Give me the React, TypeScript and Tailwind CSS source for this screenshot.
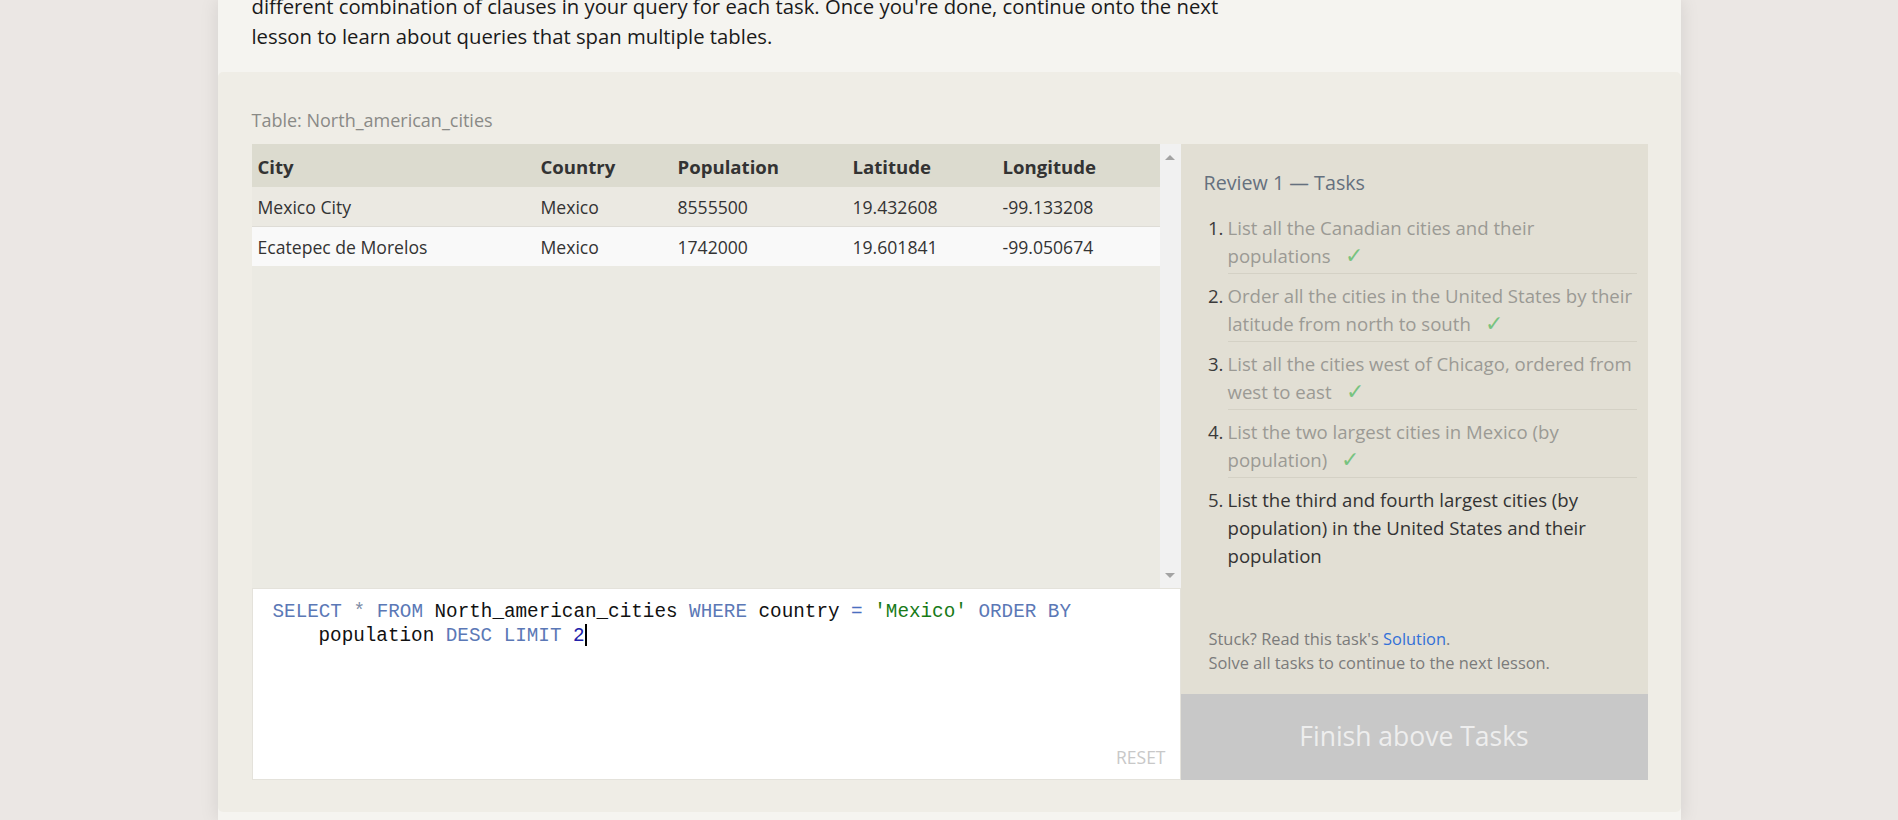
const rows = [
  ["Mexico City", "Mexico", "8555500", "19.432608", "-99.133208"],
  ["Ecatepec de Morelos", "Mexico", "1742000", "19.601841", "-99.050674"],
];

const tasks: { lines: string[]; done: boolean }[] = [
  { lines: ["List all the Canadian cities and their", "populations"], done: true },
  { lines: ["Order all the cities in the United States by their", "latitude from north to south"], done: true },
  { lines: ["List all the cities west of Chicago, ordered from", "west to east"], done: true },
  { lines: ["List the two largest cities in Mexico (by", "population)"], done: true },
  {
    lines: ["List the third and fourth largest cities (by", "population) in the United States and their", "population"],
    done: false,
  },
];

function Kw({ children }: { children: React.ReactNode }) {
  return <span className="text-[#5b78b6]">{children}</span>;
}

export default function App() {
  return (
    <div className="w-full h-[820px] overflow-hidden bg-[#ebe7e4] font-['Open_Sans',sans-serif]">
      <div className="mx-auto w-[1463px] h-full bg-[#f5f4f0] shadow-[0_0_18px_rgba(0,0,0,0.10)] flex flex-col">
        <div className="h-[72px] shrink-0 overflow-hidden px-[34px]">
          <p className="-mt-[9px] text-[20.3px] leading-[30px] text-[#1a1a1a] whitespace-nowrap">
            different combination of clauses in your query for each task. Once you're done, continue onto the next
            <br />
            lesson to learn about queries that span multiple tables.
          </p>
        </div>
        <div className="h-[740px] shrink-0 bg-[#efede6] rounded-[5px] pl-[34px] pr-[32px] pt-[36px]">
          <div className="h-[24px] leading-[24px] text-[18px] text-[#8a8a86] mb-[12px]">Table: North_american_cities</div>
          <div className="flex h-[636px]">
            <div className="w-[929px] flex flex-col">
              <div className="h-[444px] shrink-0 flex bg-[#ebeae3]">
                <div className="flex-1 text-[#333]">
                  <div className="grid grid-cols-[283px_137px_175px_150px_1fr] h-[43px] items-center bg-[#dcdbcf] text-[18.6px] font-bold pt-[2px]">
                    {["City", "Country", "Population", "Latitude", "Longitude"].map((h) => (
                      <div key={h} className="pl-[6px]">{h}</div>
                    ))}
                  </div>
                  {rows.map((r, i) => (
                    <div
                      key={i}
                      className={
                        i === 0
                          ? "grid grid-cols-[283px_137px_175px_150px_1fr] h-[40px] items-center bg-[#ebe9e2] border-b border-[#dedcd6] text-[17.6px] pt-[1px]"
                          : "grid grid-cols-[283px_137px_175px_150px_1fr] h-[39px] items-center bg-[#f9f9f9] text-[17.6px] pt-[1px]"
                      }
                    >
                      {r.map((c, j) => (
                        <div key={j} className="pl-[6px]">{c}</div>
                      ))}
                    </div>
                  ))}
                </div>
                <div className="w-[21px] bg-[#f1f1f1] flex flex-col items-center justify-between pt-[11px] pb-[10px]">
                  <div className="w-0 h-0 border-l-[5px] border-r-[5px] border-b-[5px] border-l-transparent border-r-transparent border-b-[#a3a3a3]" />
                  <div className="w-0 h-0 border-l-[5px] border-r-[5px] border-t-[5px] border-l-transparent border-r-transparent border-t-[#a3a3a3]" />
                </div>
              </div>
              <div className="h-[192px] shrink-0 bg-white border border-[#e4e2db] flex flex-col pl-[20px] pr-[14px] pt-[11px] pb-[11px]">
                <div className="font-['Liberation_Mono',monospace] text-[19.3px] leading-[24px] text-[#111] whitespace-pre">
                  <div>
                    <Kw>SELECT</Kw> <span className="text-[#7d8ca6]">*</span> <Kw>FROM</Kw> North_american_cities <Kw>WHERE</Kw> country{" "}
                    <span className="text-[#4a6fc0]">=</span> <span className="text-[#187a18]">'Mexico'</span> <Kw>ORDER BY</Kw>
                  </div>
                  <div className="pl-[46px]">
                    population <Kw>DESC</Kw> <Kw>LIMIT</Kw> <span className="text-[#2222aa]">2</span>
                    <span className="inline-block w-[2px] h-[22px] bg-black align-[-5px]" />
                  </div>
                </div>
                <div className="mt-auto self-end text-[17.5px] leading-[22px] text-[#c8c8c8]">RESET</div>
              </div>
            </div>
            <div className="w-[467px] bg-[#e2dfd4] flex flex-col">
              <div className="pl-[23px] pr-[11px] pt-[25px]">
                <div className="text-[19.7px] leading-[28px] text-[#65707e]">Review 1 — Tasks</div>
                <ol className="mt-[9px]">
                  {tasks.map((t, i) => (
                    <li key={i} className="flex items-start text-[18.6px] leading-[28px]">
                      <span className="w-[24px] shrink-0 pr-[4px] text-right pt-[8px] text-[#3a3a3a]">{i + 1}.</span>
                      <div
                        className={
                          (i < tasks.length - 1 ? "border-b border-[#d4d1c5] " : "") +
                          "flex-1 pt-[8px] pb-[3px] " +
                          (t.done ? "text-[#9b9a94]" : "text-[#333]")
                        }
                      >
                        {t.lines.map((l, k) => (
                          <div key={k} className="whitespace-nowrap h-[28px]">
                            {l}
                            {t.done && k === t.lines.length - 1 ? (
                              <span className="ml-[14px] text-[22px] leading-[0] text-[#78c37f]">✓</span>
                            ) : null}
                          </div>
                        ))}
                      </div>
                    </li>
                  ))}
                </ol>
              </div>
              <div className="mt-auto pl-[28px] pb-[19px] text-[16.4px] leading-[24px] text-[#7b7b7b]">
                <div>
                  Stuck? Read this task's <span className="text-[#3270d8]">Solution</span>.
                </div>
                <div>Solve all tasks to continue to the next lesson.</div>
              </div>
              <div className="h-[86px] shrink-0 bg-[#c8c8c8] flex items-center justify-center text-[26.5px] text-[#eeeeee]">
                Finish above Tasks
              </div>
            </div>
          </div>
        </div>
      </div>
    </div>
  );
}
